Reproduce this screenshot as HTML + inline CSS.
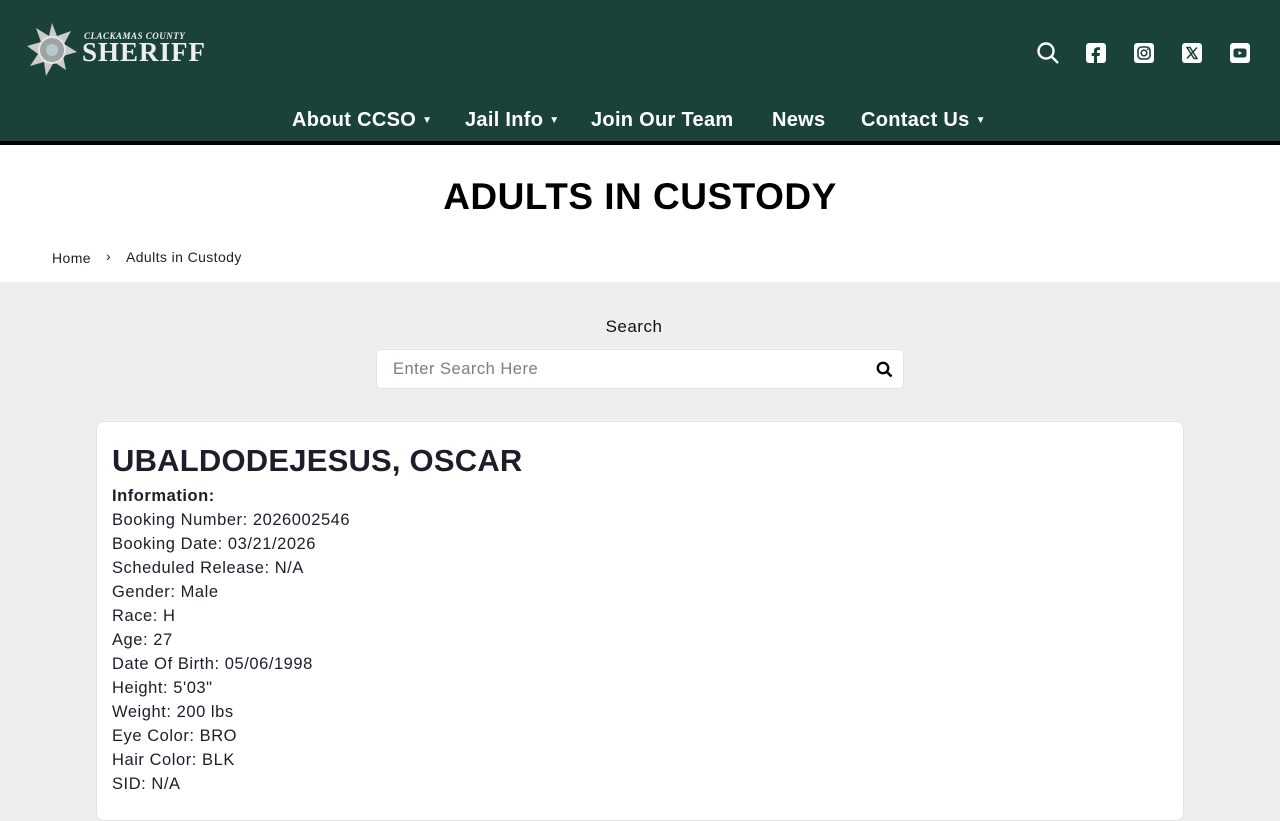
<!DOCTYPE html>
<html><head><meta charset="utf-8">
<style>
*{margin:0;padding:0;box-sizing:border-box}
body{width:1280px;height:800px;overflow:hidden;background:#eeeeee;font-family:"Liberation Sans",sans-serif;color:#1c1f2a}
.hdr{position:absolute;top:0;left:0;width:1280px;height:141px;background:#1a4239}
.bar{position:absolute;top:141px;left:0;width:1280px;height:4px;background:#000}
.nav{position:absolute;top:109px;left:0;width:1280px;text-align:center;color:#fff;font-weight:bold;font-size:20px;letter-spacing:0.3px}
.nav span{position:absolute;white-space:nowrap}
.nav i{font-style:normal;font-size:10px;margin-left:6px;vertical-align:3px}
.white{position:absolute;top:145px;left:0;width:1280px;height:137px;background:#fff}
h1{position:absolute;top:176px;left:0;width:1280px;text-align:center;font-size:37px;font-weight:900;letter-spacing:0.5px;color:#000}
.bc{position:absolute;top:249px;font-size:14px;color:#1c1f2a;letter-spacing:0.4px}
.card{position:absolute;top:421px;left:96px;width:1088px;height:400px;background:#fff;border:1px solid #e3e3e3;border-radius:8px}
.card h2{position:absolute;left:15px;top:21px;font-size:31px;font-weight:bold;letter-spacing:0.2px}
.card .info{position:absolute;left:15px;top:62px;font-size:16.5px;line-height:24px;letter-spacing:0.55px}
</style></head><body>
<div class="hdr">
 <svg style="position:absolute;left:24px;top:22px" width="56" height="56" viewBox="0 0 56 56">
  <polygon points="28,1 33,14 47,9 40,22 53,30 39,34 42,48 30,40 22,54 20,40 6,44 14,32 3,24 17,20 12,6 25,14" fill="#c9cccb"/>
  <circle cx="28" cy="28" r="13" fill="#9ea4a3" stroke="#e6e6e6" stroke-width="2"/>
  <circle cx="28" cy="28" r="6" fill="#b8c8cc"/>
 </svg>
 <div style="position:absolute;left:84px;top:31px;color:#eee;font-family:'Liberation Serif',serif;font-style:italic;font-weight:bold;font-size:9px;letter-spacing:0.5px">CLACKAMAS COUNTY</div>
 <div style="position:absolute;left:82px;top:37px;color:#eee;font-family:'Liberation Serif',serif;font-weight:bold;font-size:27px;letter-spacing:1px">SHERIFF</div>
 <svg style="position:absolute;left:1036px;top:41px" width="24" height="24" viewBox="0 0 24 24" fill="none" stroke="#fff" stroke-width="2.4"><circle cx="10" cy="10" r="7.5"/><path d="M15.5 15.5L22 22"/></svg>
 <svg style="position:absolute;left:1086px;top:43px" width="20" height="20" viewBox="0 0 20 20"><rect width="20" height="20" rx="3" fill="#fff"/><path d="M11 20v-7h2.5l.4-3H11V8.3c0-.8.3-1.3 1.4-1.3H14V4.3c-.3 0-1.2-.1-2.2-.1C9.6 4.2 8 5.5 8 7.900V10H5.700v3H8v7z" fill="#1a4239"/></svg>
 <svg style="position:absolute;left:1134px;top:43px" width="20" height="20" viewBox="0 0 20 20"><rect width="20" height="20" rx="3" fill="#fff"/><rect x="4" y="4" width="12" height="12" rx="3.5" fill="none" stroke="#1a4239" stroke-width="1.6"/><circle cx="10" cy="10" r="2.8" fill="none" stroke="#1a4239" stroke-width="1.6"/><circle cx="13.6" cy="6.4" r=".9" fill="#1a4239"/></svg>
 <svg style="position:absolute;left:1182px;top:43px" width="20" height="20" viewBox="0 0 20 20"><rect width="20" height="20" rx="3" fill="#fff"/><path d="M5 4.5h3l7 11h-3zM15 4.5l-10 11" stroke="#1a4239" stroke-width="1.5" fill="none"/></svg>
 <svg style="position:absolute;left:1230px;top:43px" width="20" height="20" viewBox="0 0 20 20"><rect width="20" height="20" rx="3" fill="#fff"/><rect x="3.5" y="5.5" width="13" height="9" rx="2.5" fill="#1a4239"/><path d="M8.5 8v4l3.5-2z" fill="#fff"/></svg>
 <div class="nav">
  <span style="left:292px">About CCSO<i>▼</i></span>
  <span style="left:465px">Jail Info<i>▼</i></span>
  <span style="left:591px">Join Our Team</span>
  <span style="left:772px">News</span>
  <span style="left:861px">Contact Us<i>▼</i></span>
 </div>
</div>
<div class="bar"></div>
<div class="white"></div>
<h1>ADULTS IN CUSTODY</h1>
<div class="bc" style="left:52px;top:250px">Home</div>
<div class="bc" style="left:106px;top:248px">›</div>
<div class="bc" style="left:126px">Adults in Custody</div>
<div style="position:absolute;top:317px;left:0;width:1268px;text-align:center;font-size:17px;color:#111;letter-spacing:0.5px">Search</div>
<div style="position:absolute;top:349px;left:376px;width:528px;height:40px;background:#fff;border:1px solid #e3e3e3;border-radius:5px">
 <div style="position:absolute;left:16px;top:10px;font-size:16.5px;color:#7a7d88;letter-spacing:0.5px">Enter Search Here</div>
 <svg style="position:absolute;left:499px;top:11px" width="17" height="17" viewBox="0 0 17 17" fill="none" stroke="#000" stroke-width="2.4"><circle cx="7" cy="7" r="5.2"/><path d="M11 11l4.5 4.5"/></svg>
</div>
<div class="card">
 <h2>UBALDODEJESUS, OSCAR</h2>
 <div class="info"><b>Information:</b><br>Booking Number: 2026002546<br>Booking Date: 03/21/2026<br>Scheduled Release: N/A<br>Gender: Male<br>Race: H<br>Age: 27<br>Date Of Birth: 05/06/1998<br>Height: 5'03"<br>Weight: 200 lbs<br>Eye Color: BRO<br>Hair Color: BLK<br>SID: N/A</div>
</div>
</body></html>
